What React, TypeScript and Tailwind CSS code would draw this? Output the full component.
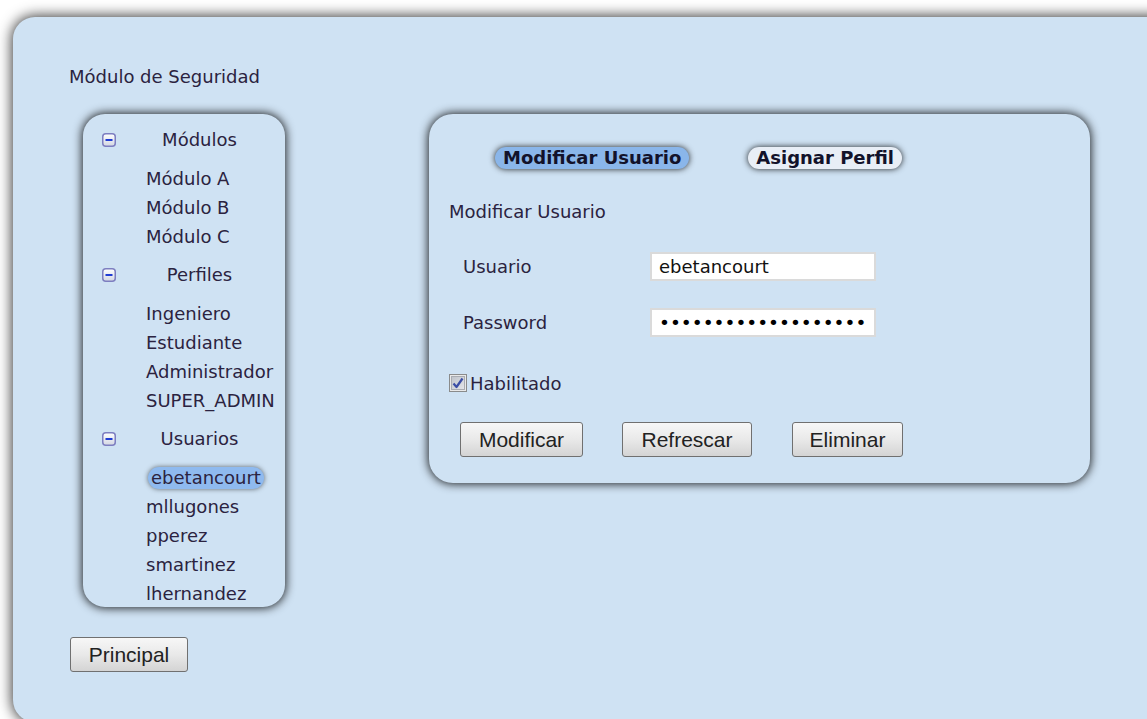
import React from 'react';

const modulos = ['Módulo A', 'Módulo B', 'Módulo C'];
const perfiles = ['Ingeniero', 'Estudiante', 'Administrador', 'SUPER_ADMIN'];
const usuarios = ['ebetancourt', 'mllugones', 'pperez', 'smartinez', 'lhernandez'];

// small "collapse" box shown next to each tree node
const MinusBox: React.FC = () => (
  <svg width="14" height="14" viewBox="0 0 14 14" className="shrink-0">
    <defs>
      <linearGradient id="minus-fill" x1="0" y1="0" x2="0" y2="1">
        <stop offset="0" stopColor="#ffffff" />
        <stop offset="1" stopColor="#d3d6e2" />
      </linearGradient>
    </defs>
    <rect x="0.75" y="0.75" width="12.5" height="12.5" rx="3" fill="url(#minus-fill)" stroke="#7d7ec0" strokeWidth="1.5" />
    <rect x="3.5" y="6" width="7" height="2" fill="#1f3cd4" />
  </svg>
);

const CheckBox: React.FC = () => (
  <svg width="18" height="18" viewBox="0 0 18 18" className="shrink-0">
    <defs>
      <linearGradient id="check-fill" x1="0" y1="0" x2="1" y2="1">
        <stop offset="0" stopColor="#bfc3ca" />
        <stop offset="1" stopColor="#e4e6ea" />
      </linearGradient>
    </defs>
    <rect x="0.5" y="0.5" width="17" height="17" fill="#e9e9e9" stroke="#8a8b8b" />
    <rect x="2.5" y="2.5" width="13" height="13" fill="url(#check-fill)" stroke="#a9acb2" />
    <path d="M4.5 9.5 L7.5 13 L13.5 4.5" fill="none" stroke="#3b4ea6" strokeWidth="2.2" strokeLinejoin="round" />
  </svg>
);

type TreeGroupProps = { title: string; items: string[]; selected?: string };

const TreeGroup: React.FC<TreeGroupProps> = ({ title, items, selected }) => (
  <div>
    <div className="flex items-center h-[29px] pl-[19px] mb-[10px]">
      <MinusBox />
      <span className="flex-1 text-center pr-[2px]">{title}</span>
    </div>
    <ul className="pl-[63px]">
      {items.map((item) => (
        <li key={item} className="h-[29px] leading-[29px] whitespace-nowrap">
          {item === selected ? (
            <span className="inline-block ml-[2px] px-[3px] leading-[22px] rounded-[11px] bg-[#8fbaef] shadow-[0_0_5px_rgba(0,0,0,0.55)]">
              {item}
            </span>
          ) : (
            item
          )}
        </li>
      ))}
    </ul>
  </div>
);

const btn =
  "h-[35px] flex items-center justify-center rounded-[3px] border border-[#707070] bg-linear-to-b from-[#f7f7f7] via-[#e9e9e9] to-[#d4d4d4] text-[21px] text-[#222] font-['Liberation_Sans',Arial,sans-serif]";

const panelShadow = 'shadow-[0_0_10px_1px_rgba(0,0,0,0.85)]';

export default function App() {
  return (
    <div className="h-[719px] overflow-hidden bg-white pt-[17px] pl-[13px] text-[18px] text-[#2b2340] font-['DejaVu_Sans',Verdana,sans-serif]">
      <div className="w-[1160px] h-[705px] rounded-l-[22px] bg-[#cfe2f3] shadow-[0_0_14px_1px_rgba(0,0,0,0.8)] pl-[56px] pt-[49px]">
        <p className="leading-[22px]">Módulo de Seguridad</p>

        <div className="mt-[26px] flex items-start">
          <div className="flex flex-col items-start">
            <nav className={`ml-[14px] w-[202px] h-[493px] overflow-hidden rounded-[22px] bg-[#cfe2f3] ${panelShadow} pt-[11px] flex flex-col gap-[9px]`}>
              <TreeGroup title="Módulos" items={modulos} />
              <TreeGroup title="Perfiles" items={perfiles} />
              <TreeGroup title="Usuarios" items={usuarios} selected="ebetancourt" />
            </nav>
            <button className={`${btn} mt-[30px] ml-[1px] w-[118px]`}>Principal</button>
          </div>

          <section className={`ml-[144px] w-[661px] h-[369px] rounded-[24px] bg-[#cfe2f3] ${panelShadow} pt-[33px]`}>
            <div className="flex pl-[66px] font-bold text-[#12122a]">
              <span className="h-[22px] leading-[22px] px-[8px] rounded-full bg-[#8ab6ea] shadow-[0_0_6px_rgba(0,0,0,0.85)]">
                Modificar Usuario
              </span>
              <span className="ml-[59px] h-[22px] leading-[22px] px-[8px] rounded-full bg-[#e8eef6] shadow-[0_0_6px_rgba(0,0,0,0.85)]">
                Asignar Perfil
              </span>
            </div>

            <p className="mt-[32px] pl-[20px] leading-[22px]">Modificar Usuario</p>

            <div className="mt-[29px] pl-[34px] flex items-center">
              <span className="w-[187px]">Usuario</span>
              <input
                readOnly
                value="ebetancourt"
                className="w-[226px] h-[29px] border-2 border-[#dadada] bg-white px-[7px] text-[#111] outline-none"
              />
            </div>
            <div className="mt-[27px] pl-[34px] flex items-center">
              <span className="w-[187px]">Password</span>
              <input
                readOnly
                type="password"
                value="ebetancourt12345678"
                className="w-[226px] h-[29px] border-2 border-[#dadada] bg-white pl-[7px] pr-[2px] text-[18.5px] text-[#000] outline-none"
              />
            </div>

            <label className="mt-[35px] pl-[20px] flex items-center h-[22px]">
              <CheckBox />
              <span className="ml-[3px]">Habilitado</span>
            </label>

            <div className="mt-[28px] pl-[31px] flex">
              <button className={`${btn} w-[123px]`}>Modificar</button>
              <button className={`${btn} ml-[39px] w-[130px]`}>Refrescar</button>
              <button className={`${btn} ml-[40px] w-[111px]`}>Eliminar</button>
            </div>
          </section>
        </div>
      </div>
    </div>
  );
}
